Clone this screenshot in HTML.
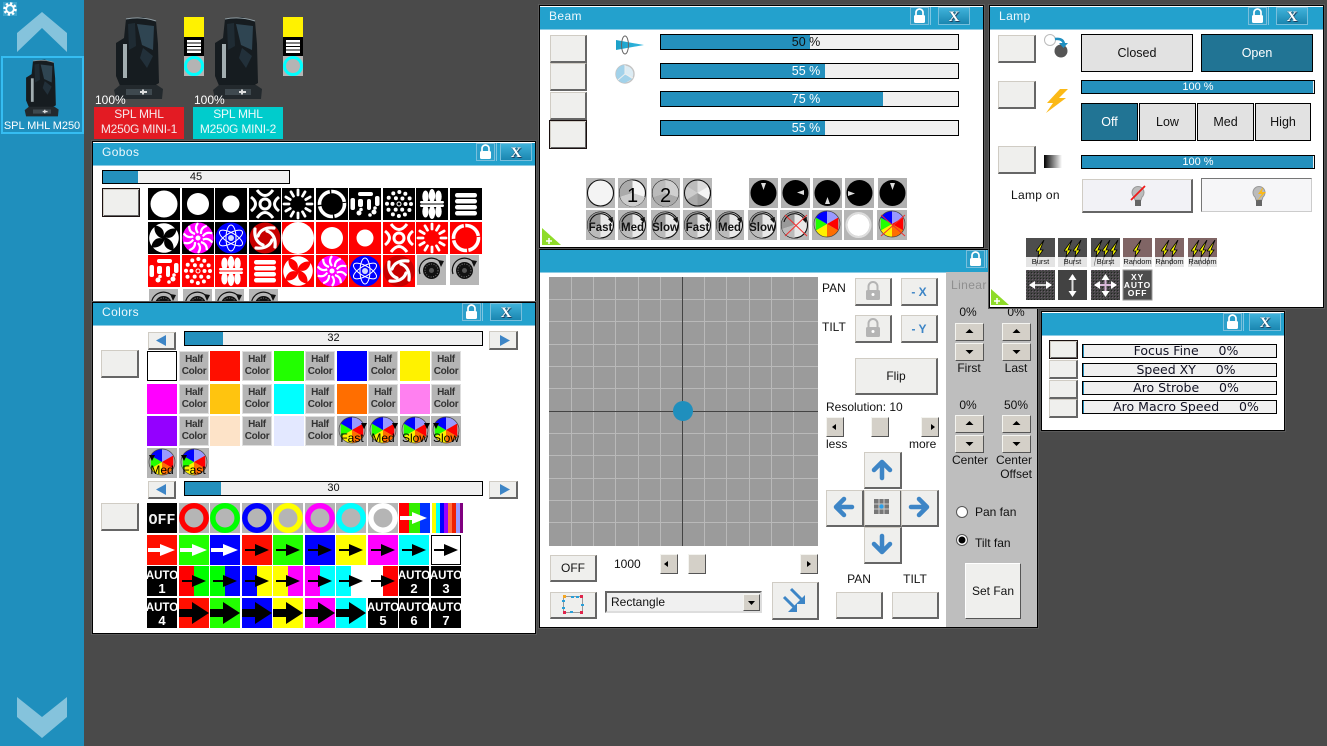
<!DOCTYPE html>
<html><head><meta charset="utf-8"><title>Fixture control</title>
<style>
html,body{margin:0;padding:0;width:1327px;height:746px;overflow:hidden;background:#4a4a4a;font-family:"Liberation Sans",sans-serif;font-size:12px;color:#111}
.a{position:absolute;box-sizing:border-box}
svg.l{position:absolute;left:0;top:0;width:1327px;height:746px;overflow:hidden;pointer-events:none;font-family:"Liberation Sans",sans-serif}
.t{position:absolute;white-space:nowrap;line-height:14px}
.c{text-align:center}
.w{position:absolute;box-sizing:border-box;background:#fff;border:1px solid #000;box-shadow:0 0 0 1px #5a5a5a}
.h{position:absolute;box-sizing:border-box;background:#23a1cd;border-bottom:1px solid #8ccbe4;color:#eef8fc;height:23px;padding-left:9px;line-height:19px;font-size:12px;letter-spacing:.4px}
.b{position:absolute;box-sizing:border-box;background:#efefed;border:1px solid #d0ccc4;border-right:2px solid #666;border-bottom:2px solid #666;display:flex;align-items:center;justify-content:center;font-size:12px;color:#111}
.f{border:1px solid #1a1010;box-shadow:inset 1px 1px 0 #d0ccc4,inset -1px -1px 0 #666,inset 2px 2px 0 #efefed}
.sb{position:absolute;box-sizing:border-box;background:#d4d0c8;border:1px solid #f4f4f0;border-right:1px solid #555;border-bottom:1px solid #555}
.s{position:absolute;box-sizing:border-box;border:1px solid #000;background-color:#f0f0f0;background-image:linear-gradient(#2490bd,#2490bd);background-repeat:no-repeat;text-align:center;font-size:11px;line-height:12px;color:#111}
.s2{border-width:1px;font-size:12.5px;line-height:14px;color:#fff}
.s3{background-size:1px 100%;font:12.5px/12px "DejaVu Sans",sans-serif;color:#112;white-space:pre;padding-left:13px}
.tg{position:absolute;box-sizing:border-box;border:1px solid #000;text-align:center;display:flex;align-items:center;justify-content:center;font-size:12.5px;background:#e2e2e2;color:#111}
.on{background:#217494;color:#fff}
.hc{position:absolute;box-sizing:border-box;width:30px;height:30px;border:1px solid #dedede;background:#b5b5b5;font-weight:bold;font-size:10px;line-height:12px;color:#333;text-align:center;padding-top:2px;letter-spacing:-.3px}
.lk{position:absolute;box-sizing:border-box;width:19px;height:18px;background:#2b9fca;border:1px solid #79bfdc;box-shadow:1px 0 0 #2b9fca,2px 0 0 #7fc6e2}
.x{position:absolute;box-sizing:border-box;width:32px;height:18px;background:linear-gradient(#3fb2da,#1a86b0);border:1px solid #79bfdc;color:#fff;font:bold 15px/14px "Liberation Serif",serif;text-align:center;padding-top:2px;text-shadow:0 0 1px #123,1px 1px 0 #246}
</style></head><body>

<svg width="0" height="0" style="position:absolute"><defs>
<symbol id="lock" viewBox="0 0 19 18" width="19" height="18"><path d="M6 8V5.500a3.500 3.500 0 0 1 7 0V8" fill="none" stroke="#fff" stroke-width="1.700"/><rect x="4" y="8" width="11" height="8" rx="1.500" fill="#fff"/></symbol>
<symbol id="lockg" viewBox="0 0 16 20" width="16" height="20"><path d="M3.500 9V5.500a4.500 4.500 0 0 1 9 0V9" fill="none" stroke="#b4b4b4" stroke-width="2"/><rect x="1" y="9" width="14" height="10" rx="1.500" fill="#b4b4b4"/><circle cx="8" cy="13.500" r="1.500" fill="#fff"/></symbol>
<symbol id="mh" viewBox="0 0 52 84" width="52" height="84">
<path d="M13 3L30 1L43 5L45 28L46 67L38 72H8L3 60V27L11 22Z" fill="#161c20"/>
<path d="M1 74L7 69H44L50 73L49 83H3Z" fill="#23292d"/><rect x="13" y="73" width="26" height="6" fill="#3f494f"/><path d="M27 76h7M30 73.500v5" stroke="#ddd" stroke-width="2"/>
<path d="M24 8L41 10L40 34L29 29Z" fill="#2f4552"/><path d="M13 3Q28 0 43 5" fill="none" stroke="#8d9aa0"/><path d="M30 32L40 40L34 52L27 42Z" fill="#22303a"/><path d="M15 8L22 7L23 30L16 34Z" fill="#1f2b33"/>
<rect x="10" y="28" width="4" height="34" fill="#a2adb0"/></symbol>
<symbol id="g4" viewBox="0 0 32 32" width="32" height="32"><g fill="none" stroke="#fff" stroke-width="3"><circle cx="16" cy="16" r="5"/><path d="M8 2Q16 13 24 2M8 30Q16 19 24 30M2 9Q11 16 2 23M30 9Q21 16 30 23"/></g></symbol>
<symbol id="g5" viewBox="0 0 32 32" width="32" height="32"><g stroke="#fff" stroke-width="2.800" stroke-linecap="round" stroke-dasharray="5 18 5"><path d="M16 2V30"/><path d="M16 2V30" transform="rotate(30 16 16)"/><path d="M16 2V30" transform="rotate(60 16 16)"/><path d="M16 2V30" transform="rotate(90 16 16)"/><path d="M16 2V30" transform="rotate(120 16 16)"/><path d="M16 2V30" transform="rotate(150 16 16)"/></g></symbol>
<symbol id="g6" viewBox="0 0 32 32" width="32" height="32"><circle cx="16" cy="16" r="12.500" fill="none" stroke="#fff" stroke-width="3.600" stroke-dasharray="18.100 1.535" transform="rotate(-5 16 16)"/></symbol>
<symbol id="g7" viewBox="0 0 32 32" width="32" height="32"><g fill="#fff"><rect x="9" y="4" width="15" height="4" rx="2"/><rect x="1.500" y="10" width="4.500" height="12" rx="2"/><rect x="9" y="11" width="5" height="8" rx="2"/><rect x="18" y="11" width="4" height="11" rx="2"/><rect x="26" y="8" width="4.500" height="10" rx="2"/><circle cx="10" cy="25" r="2.500"/><circle cx="12" cy="21.500" r="1.800"/><circle cx="25" cy="24" r="2.500"/><circle cx="26" cy="20" r="1.800"/><circle cx="21" cy="27" r="1.800"/></g></symbol>
<symbol id="g8" viewBox="0 0 32 32" width="32" height="32"><g fill="none" stroke="#fff" stroke-linecap="round"><circle cx="16" cy="16" r=".5" stroke-width="4"/><circle cx="16" cy="16" r="6.500" stroke-width="4" stroke-dasharray="0 6.807"/><circle cx="16" cy="16" r="12" stroke-width="4" stroke-dasharray="0 6.283"/></g></symbol>
<symbol id="g9" viewBox="0 0 32 32" width="32" height="32"><g fill="#fff"><ellipse cx="9.500" cy="8.500" rx="3.200" ry="6"/><ellipse cx="16" cy="7.500" rx="3.200" ry="6.500"/><ellipse cx="22.500" cy="8.500" rx="3.200" ry="6"/><ellipse cx="9.500" cy="23.500" rx="3.200" ry="6"/><ellipse cx="16" cy="24.500" rx="3.200" ry="6.500"/><ellipse cx="22.500" cy="23.500" rx="3.200" ry="6"/><rect x="4" y="13" width="24" height="2.500" rx="1.200"/><rect x="4" y="16.500" width="24" height="2.500" rx="1.200"/></g></symbol>
<symbol id="g10" viewBox="0 0 32 32" width="32" height="32"><g fill="#fff"><rect x="5" y="5" width="22" height="4.500" rx="2.200"/><rect x="5" y="11" width="22" height="4.500" rx="2.200"/><rect x="5" y="17" width="22" height="4.500" rx="2.200"/><rect x="5" y="23" width="22" height="4.500" rx="2.200"/></g></symbol>
<symbol id="g11" viewBox="0 0 32 32" width="32" height="32"><g fill="#fff"><path d="M15.500 14.500C17 9 14 5 8 3.500A14.500 14.500 0 0 1 27 6.500C22 6 17 9 15.500 14.500Z"/><path d="M15.500 14.500C17 9 14 5 8 3.500A14.500 14.500 0 0 1 27 6.500C22 6 17 9 15.500 14.500Z" transform="rotate(90 16 16)"/><path d="M15.500 14.500C17 9 14 5 8 3.500A14.500 14.500 0 0 1 27 6.500C22 6 17 9 15.500 14.500Z" transform="rotate(180 16 16)"/><path d="M15.500 14.500C17 9 14 5 8 3.500A14.500 14.500 0 0 1 27 6.500C22 6 17 9 15.500 14.500Z" transform="rotate(270 16 16)"/></g></symbol>
<symbol id="g12" viewBox="0 0 32 32" width="32" height="32"><circle cx="16" cy="16" r="15.500" fill="#f0f"/><g fill="none" stroke="#fff" stroke-width="2.200"><path d="M16 11Q12 6 16 1"/><path d="M16 11Q12 6 16 1" transform="rotate(36 16 16)"/><path d="M16 11Q12 6 16 1" transform="rotate(72 16 16)"/><path d="M16 11Q12 6 16 1" transform="rotate(108 16 16)"/><path d="M16 11Q12 6 16 1" transform="rotate(144 16 16)"/><path d="M16 11Q12 6 16 1" transform="rotate(180 16 16)"/><path d="M16 11Q12 6 16 1" transform="rotate(216 16 16)"/><path d="M16 11Q12 6 16 1" transform="rotate(252 16 16)"/><path d="M16 11Q12 6 16 1" transform="rotate(288 16 16)"/><path d="M16 11Q12 6 16 1" transform="rotate(324 16 16)"/></g><circle cx="16" cy="16" r="2.500" fill="#fff"/></symbol>
<symbol id="g13" viewBox="0 0 32 32" width="32" height="32"><circle cx="16" cy="16" r="15.500" fill="#00f"/><g fill="none" stroke="#fff" stroke-width="1"><ellipse cx="16" cy="16" rx="5" ry="13"/><ellipse cx="16" cy="16" rx="5" ry="13" transform="rotate(60 16 16)"/><ellipse cx="16" cy="16" rx="5" ry="13" transform="rotate(120 16 16)"/></g><circle cx="16" cy="16" r="3" fill="#cfd8ff"/></symbol>
<symbol id="g14" viewBox="0 0 32 32" width="32" height="32"><circle cx="16" cy="16" r="15.500" fill="#c80000"/><g fill="none" stroke="#fff" stroke-width="3.200" stroke-linecap="round"><path d="M9 14C11 8 17 5 25 6"/><path d="M9 14C11 8 17 5 25 6" transform="rotate(90 16 16)"/><path d="M9 14C11 8 17 5 25 6" transform="rotate(180 16 16)"/><path d="M9 14C11 8 17 5 25 6" transform="rotate(270 16 16)"/></g></symbol>
<symbol id="rot" viewBox="0 0 29 30" width="29" height="30"><rect width="29" height="30" fill="#b6b6b6"/><circle cx="14.500" cy="15.500" r="8.500" fill="#111"/><circle cx="14.500" cy="15.500" r="6.500" fill="none" stroke="#777" stroke-width="1" stroke-dasharray="1 1.500"/><circle cx="14.500" cy="15.500" r="2.500" fill="#555"/><path d="M3 19A12 12 0 0 1 24 8" fill="none" stroke="#111" stroke-width="1.200"/><path d="M21 5L27 6L24 12Z" fill="#111"/></symbol>
<symbol id="aw" viewBox="0 0 30 30" width="30" height="30"><path d="M1 13H13V9L28 15L13 21V17H1Z" fill="#fff"/></symbol>
<symbol id="ab" viewBox="0 0 30 30" width="30" height="30"><path d="M3 14H13V9L27 15L13 21V16H3Z" fill="#000"/></symbol>
<symbol id="abig" viewBox="0 0 30 30" width="30" height="30"><path d="M0 11H13V4L30 15L13 26V19H0Z" fill="#000"/></symbol>
<symbol id="cw" viewBox="0 0 30 30" width="30" height="30"><rect width="30" height="30" fill="#b5b5b5"/><path d="M15 14V1A13 13 0 0 1 26.260 7.500Z" fill="#99f"/><path d="M15 14L26.260 7.500V20.500Z" fill="#f00"/><path d="M15 14L26.260 20.500A13 13 0 0 1 15 27Z" fill="#ff6e00"/><path d="M15 14V27A13 13 0 0 1 3.740 20.500Z" fill="#fff000"/><path d="M15 14L3.740 20.500V7.500Z" fill="#22ff00"/><path d="M15 14L3.740 7.500A13 13 0 0 1 15 1Z" fill="#00f"/><circle cx="15" cy="14" r="13" fill="none" stroke="#444" stroke-width=".7"/></symbol>
<symbol id="gw" viewBox="0 0 29 30" width="29" height="30"><rect width="29" height="30" fill="#b8b8b8"/><circle cx="14.500" cy="15" r="13" fill="#f4f4f4" stroke="#111" stroke-width="1.100"/></symbol>
<symbol id="gs" viewBox="0 0 29 30" width="29" height="30"><rect width="29" height="30" fill="#b8b8b8"/><circle cx="14.500" cy="15" r="13" fill="#e8e8e8" stroke="#111" stroke-width="1.100"/><path d="M14.500 15V2A13 13 0 0 0 2 19Z" fill="#999"/><path d="M14.500 15L2 19A13 13 0 0 0 14.500 28Z" fill="#bbb"/><path d="M4 12A11 11 0 0 1 25 11" fill="none" stroke="#111" stroke-width="1.100"/><path d="M22 9L27 7L26 13Z" fill="#111"/></symbol>
<symbol id="bd" viewBox="0 0 29 30" width="29" height="30"><rect width="29" height="30" fill="#b0b0b0"/><circle cx="14.500" cy="15" r="13" fill="#000"/></symbol>
<symbol id="bt" viewBox="0 0 10 26" width="10" height="26"><path d="M8 0L4 10H7L2 17L3 11H0Z" fill="#ff0" stroke="#000" stroke-width=".8"/><path d="M2 17L0 26" stroke="#777" stroke-width=".7"/></symbol>
<symbol id="tx" viewBox="0 0 29 30" width="29" height="30"><rect width="29" height="30" fill="#454545"/><rect width="29" height="30" fill="url(#dots)"/></symbol>
<pattern id="dots" width="3" height="3" patternUnits="userSpaceOnUse"><rect width="1" height="1" fill="#6a5a6a"/><rect x="2" y="2" width="1" height="1" fill="#222"/></pattern>
<linearGradient id="gr"><stop offset="0" stop-color="#000"/><stop offset="1" stop-color="#fff"/></linearGradient>
<linearGradient id="cn"><stop offset="0" stop-color="#1aa0c8"/><stop offset="1" stop-color="#35b8e0"/></linearGradient>
<symbol id="bb" viewBox="0 0 14 22" width="14" height="22"><path d="M3 11A6 6 0 1 1 11 11L10 14H4Z" fill="#bbb" stroke="#999"/><rect x="4" y="14" width="6" height="6" fill="#666"/></symbol>
</defs></svg>

<!-- Sidebar -->
<div class="a" style="left:0;top:0;width:84px;height:746px;background:#1f8fbd"></div>
<div class="a" style="left:1px;top:56px;width:83px;height:78px;border:2px solid #35bdf2"></div>
<div class="t c" style="left:0;top:119px;width:84px;color:#fff;font-size:11px;letter-spacing:-.05px">SPL MHL M250</div>
<div class="t c" style="left:94px;top:107px;width:90px;height:32px;background:#e31b23;color:#f6e8ea;line-height:15px;letter-spacing:-.2px">SPL MHL<br>M250G MINI-1</div>
<div class="t c" style="left:193px;top:107px;width:90px;height:32px;background:#00cccc;color:#eafafa;line-height:15px;letter-spacing:-.2px">SPL MHL<br>M250G MINI-2</div>
<svg class="l">
<rect x="3" y="2" width="14" height="14" fill="#3ea4cc"/><circle cx="10" cy="9" r="5.500" fill="none" stroke="#fff" stroke-width="2.500" stroke-dasharray="2.200 2.100"/><circle cx="10" cy="9" r="3.800" fill="none" stroke="#fff" stroke-width="1.800"/>
<path d="M17 33L42 12L67 33V52L42 28L17 52Z" fill="#85c3dc"/>
<path d="M17 697L42 717L67 697V717L42 738L17 717Z" fill="#85c3dc"/>
<use href="#mh" x="24" y="58" width="36" height="60"/>
<use href="#mh" x="113" y="16" width="52" height="84"/>
<use href="#mh" x="212" y="16" width="52" height="84"/>
<rect x="184" y="17" width="20" height="20" fill="#fff200"/><rect x="184" y="37" width="20" height="19" fill="#000"/>
<rect x="187" y="40" width="14" height="2.500" fill="#fff"/><rect x="187" y="43.500" width="14" height="2.500" fill="#fff"/><rect x="187" y="47" width="14" height="2.500" fill="#fff"/><rect x="187" y="50.500" width="14" height="2.500" fill="#fff"/>
<rect x="184" y="56" width="20" height="20" fill="#b4b4b4"/><circle cx="194" cy="66" r="8.500" fill="none" stroke="#00ffff" stroke-width="3"/>
<rect x="283" y="17" width="20" height="20" fill="#fff200"/><rect x="283" y="37" width="20" height="19" fill="#000"/>
<rect x="286" y="40" width="14" height="2.500" fill="#fff"/><rect x="286" y="43.500" width="14" height="2.500" fill="#fff"/><rect x="286" y="47" width="14" height="2.500" fill="#fff"/><rect x="286" y="50.500" width="14" height="2.500" fill="#fff"/>
<rect x="283" y="56" width="20" height="20" fill="#b4b4b4"/><circle cx="293" cy="66" r="8.500" fill="none" stroke="#00ffff" stroke-width="3"/>
</svg>
<div class="t" style="left:95px;top:93px;color:#fff">100%</div>
<div class="t" style="left:194px;top:93px;color:#fff">100%</div>

<!-- Gobos -->
<div class="w" style="left:92px;top:141px;width:444px;height:162px"><div class="h" style="left:0;top:1px;width:442px">Gobos</div></div>
<div class="lk" style="left:476px;top:143px"><svg width="17" height="16" style="display:block"><use href="#lock" x="-1" y="-1"/></svg></div>
<div class="x" style="left:500px;top:143px">X</div>
<div class="s" style="left:102px;top:170px;width:188px;height:14px;background-size:35px 100%">45</div>
<div class="b f" style="left:102px;top:188px;width:38px;height:29px"></div>
<svg class="l">
<g fill="#000"><rect x="148" y="188" width="32" height="32"/><rect x="182" y="188" width="32" height="32"/><rect x="215" y="188" width="32" height="32"/><rect x="249" y="188" width="32" height="32"/><rect x="282" y="188" width="32" height="32"/><rect x="316" y="188" width="32" height="32"/><rect x="349" y="188" width="32" height="32"/><rect x="383" y="188" width="32" height="32"/><rect x="416" y="188" width="32" height="32"/><rect x="450" y="188" width="32" height="32"/>
<rect x="148" y="222" width="32" height="32"/><rect x="182" y="222" width="32" height="32"/><rect x="215" y="222" width="32" height="32"/><rect x="249" y="222" width="32" height="32"/></g>
<g fill="#f00"><rect x="282" y="222" width="32" height="32"/><rect x="316" y="222" width="32" height="32"/><rect x="349" y="222" width="32" height="32"/><rect x="383" y="222" width="32" height="32"/><rect x="416" y="222" width="32" height="32"/><rect x="450" y="222" width="32" height="32"/>
<rect x="148" y="255" width="32" height="32"/><rect x="182" y="255" width="32" height="32"/><rect x="215" y="255" width="32" height="32"/><rect x="249" y="255" width="32" height="32"/><rect x="282" y="255" width="32" height="32"/><rect x="316" y="255" width="32" height="32"/><rect x="349" y="255" width="32" height="32"/><rect x="383" y="255" width="32" height="32"/></g>
<g fill="#fff"><circle cx="164" cy="204" r="13.500"/><circle cx="198" cy="204" r="11"/><circle cx="231" cy="204" r="8.500"/><circle cx="298" cy="238" r="16"/><circle cx="332" cy="238" r="11"/><circle cx="365" cy="238" r="8.500"/></g>
<use href="#g4" x="249" y="188"/><use href="#g5" x="282" y="188"/><use href="#g6" x="316" y="188"/><use href="#g7" x="349" y="188"/><use href="#g8" x="383" y="188"/><use href="#g9" x="416" y="188"/><use href="#g10" x="450" y="188"/>
<use href="#g11" x="148" y="222"/><use href="#g12" x="182" y="222"/><use href="#g13" x="215" y="222"/><use href="#g14" x="249" y="222"/>
<use href="#g4" x="383" y="222"/><use href="#g5" x="416" y="222"/><use href="#g6" x="450" y="222"/>
<use href="#g7" x="148" y="255"/><use href="#g8" x="182" y="255"/><use href="#g9" x="215" y="255"/><use href="#g10" x="249" y="255"/><use href="#g11" x="282" y="255"/><use href="#g12" x="316" y="255"/><use href="#g13" x="349" y="255"/><use href="#g14" x="383" y="255"/>
<use href="#rot" x="417" y="255"/><use href="#rot" x="450" y="255"/>
<use href="#rot" x="149" y="289"/><use href="#rot" x="183" y="289"/><use href="#rot" x="215" y="289"/><use href="#rot" x="249" y="289"/>
</svg>

<!-- Colors -->
<div class="w" style="left:92px;top:302px;width:444px;height:332px"><div class="h" style="left:0;top:0;width:442px">Colors</div></div>
<div class="lk" style="left:462px;top:303px"><svg width="17" height="16" style="display:block"><use href="#lock" x="-1" y="-1"/></svg></div>
<div class="x" style="left:490px;top:303px">X</div>
<div class="b" style="left:148px;top:332px;width:28px;height:18px"></div>
<div class="b" style="left:489px;top:331px;width:29px;height:19px"></div>
<div class="s" style="left:184px;top:331px;width:299px;height:15px;background-size:38px 100%;line-height:13px">32</div>
<div class="b" style="left:101px;top:350px;width:38px;height:28px"></div>
<div class="b" style="left:148px;top:481px;width:28px;height:18px"></div>
<div class="b" style="left:489px;top:481px;width:29px;height:18px"></div>
<div class="s" style="left:184px;top:481px;width:299px;height:15px;background-size:36px 100%;line-height:13px">30</div>
<div class="b" style="left:101px;top:503px;width:38px;height:28px"></div>
<div class="hc" style="left:179px;top:351px">Half<br>Color</div><div class="hc" style="left:242px;top:351px">Half<br>Color</div><div class="hc" style="left:305px;top:351px">Half<br>Color</div><div class="hc" style="left:368px;top:351px">Half<br>Color</div><div class="hc" style="left:431px;top:351px">Half<br>Color</div>
<div class="hc" style="left:179px;top:384px">Half<br>Color</div><div class="hc" style="left:242px;top:384px">Half<br>Color</div><div class="hc" style="left:305px;top:384px">Half<br>Color</div><div class="hc" style="left:368px;top:384px">Half<br>Color</div><div class="hc" style="left:431px;top:384px">Half<br>Color</div>
<div class="hc" style="left:179px;top:416px">Half<br>Color</div><div class="hc" style="left:242px;top:416px">Half<br>Color</div><div class="hc" style="left:305px;top:416px">Half<br>Color</div>
<svg class="l" font-size="12">
<path d="M166 335V346L156 340.500Z" fill="#3d85c6"/><path d="M500 335V346L510 340.500Z" fill="#3d85c6"/>
<path d="M166 484V495L156 489.500Z" fill="#3d85c6"/><path d="M500 484V495L510 489.500Z" fill="#3d85c6"/>
<rect x="147.500" y="351.500" width="29" height="29" fill="#fff" stroke="#000"/>
<rect x="210" y="351" width="30" height="30" fill="#ff0f00"/><rect x="274" y="351" width="30" height="30" fill="#22ff00"/><rect x="337" y="351" width="30" height="30" fill="#00f"/><rect x="400" y="351" width="30" height="30" fill="#fff200"/>
<rect x="147" y="384" width="30" height="30" fill="#f0f"/><rect x="210" y="384" width="30" height="30" fill="#ffc40f"/><rect x="274" y="384" width="30" height="30" fill="#0ff"/><rect x="337" y="384" width="30" height="30" fill="#ff6e00"/><rect x="400" y="384" width="30" height="30" fill="#ff80f0"/>
<rect x="147" y="416" width="30" height="30" fill="#9400ff"/><rect x="210" y="416" width="30" height="30" fill="#fde3c8"/><rect x="274" y="416" width="30" height="30" fill="#e3e8ff"/>
<use href="#cw" x="337" y="416"/><use href="#cw" x="368" y="416"/><use href="#cw" x="400" y="416"/><use href="#cw" x="431" y="416"/>
<path d="M361 423h6l-3 6zM392 423h6l-3 6zM424 423h6l-3 6zM433 423h6l-3 6z" fill="#000"/>
<text x="352" y="442" text-anchor="middle" fill="#000">Fast</text><text x="383" y="442" text-anchor="middle" fill="#000">Med</text><text x="415" y="442" text-anchor="middle" fill="#000">Slow</text><text x="446" y="442" text-anchor="middle" fill="#000">Slow</text>
<use href="#cw" x="147" y="448"/><use href="#cw" x="179" y="448"/><path d="M149 455h6l-3 6zM181 455h6l-3 6z" fill="#000"/>
<text x="162" y="474" text-anchor="middle" fill="#000">Med</text><text x="194" y="474" text-anchor="middle" fill="#000">Fast</text>

<rect x="147" y="503" width="30" height="30" fill="#000"/><text x="162" y="524" text-anchor="middle" fill="#eee" font-weight="bold" font-size="15" font-family="Liberation Mono">OFF</text>
<g fill="#b5b5b5"><rect x="179" y="503" width="30" height="30"/><rect x="210" y="503" width="30" height="30"/><rect x="242" y="503" width="30" height="30"/><rect x="273" y="503" width="30" height="30"/><rect x="305" y="503" width="30" height="30"/><rect x="336" y="503" width="30" height="30"/><rect x="368" y="503" width="30" height="30"/></g>
<g fill="none" stroke-width="5.500"><circle cx="194" cy="518" r="12.200" stroke="#f00"/><circle cx="225" cy="518" r="12.200" stroke="#0f0"/><circle cx="257" cy="518" r="12.200" stroke="#00f"/><circle cx="288" cy="518" r="12.200" stroke="#ff0"/><circle cx="320" cy="518" r="12.200" stroke="#f0f"/><circle cx="351" cy="518" r="12.200" stroke="#0ff"/><circle cx="383" cy="518" r="12.200" stroke="#fff"/></g>
<rect x="399" y="503" width="10" height="30" fill="#f00"/><rect x="409" y="503" width="11" height="30" fill="#33ee00"/><rect x="420" y="503" width="10" height="30" fill="#0033ff"/><use href="#aw" x="399" y="503"/>
<rect x="432" y="503" width="4" height="30" fill="#ff0"/><rect x="436" y="503" width="4" height="30" fill="#0ff"/><rect x="440" y="503" width="4" height="30" fill="#00f"/><rect x="444" y="503" width="4" height="30" fill="#90f"/><rect x="448" y="503" width="4" height="30" fill="#ff6e40"/><rect x="452" y="503" width="4" height="30" fill="#f02000"/><rect x="456" y="503" width="4" height="30" fill="#99f"/><rect x="460" y="503" width="3" height="30" fill="#800080"/>

<rect x="147" y="535" width="30" height="30" fill="#ff0f00"/><use href="#aw" x="147" y="535"/>
<rect x="179" y="535" width="30" height="30" fill="#22ff00"/><use href="#aw" x="179" y="535"/>
<rect x="210" y="535" width="30" height="30" fill="#00f"/><use href="#aw" x="210" y="535"/>
<rect x="242" y="535" width="30" height="30" fill="#ff0f00"/><use href="#ab" x="242" y="535"/>
<rect x="273" y="535" width="30" height="30" fill="#22ff00"/><use href="#ab" x="273" y="535"/>
<rect x="305" y="535" width="30" height="30" fill="#00f"/><use href="#ab" x="305" y="535"/>
<rect x="336" y="535" width="30" height="30" fill="#ff0"/><use href="#ab" x="336" y="535"/>
<rect x="368" y="535" width="30" height="30" fill="#f0f"/><use href="#ab" x="368" y="535"/>
<rect x="399" y="535" width="30" height="30" fill="#0ff"/><use href="#ab" x="399" y="535"/>
<rect x="431.500" y="535.500" width="29" height="29" fill="#fff" stroke="#000"/><use href="#ab" x="431" y="535"/>

<g font-weight="bold" font-size="11.500" text-anchor="middle" fill="#fff">
<rect x="147" y="566" width="30" height="30" fill="#000"/><text x="162" y="579">AUTO</text><text x="162" y="593" font-size="13">1</text>
<rect x="399" y="566" width="30" height="30" fill="#000"/><text x="414" y="579">AUTO</text><text x="414" y="593" font-size="13">2</text>
<rect x="431" y="566" width="30" height="30" fill="#000"/><text x="446" y="579">AUTO</text><text x="446" y="593" font-size="13">3</text>
<rect x="147" y="598" width="30" height="30" fill="#000"/><text x="162" y="611">AUTO</text><text x="162" y="625" font-size="13">4</text>
<rect x="368" y="598" width="30" height="30" fill="#000"/><text x="383" y="611">AUTO</text><text x="383" y="625" font-size="13">5</text>
<rect x="399" y="598" width="30" height="30" fill="#000"/><text x="414" y="611">AUTO</text><text x="414" y="625" font-size="13">6</text>
<rect x="431" y="598" width="30" height="30" fill="#000"/><text x="446" y="611">AUTO</text><text x="446" y="625" font-size="13">7</text>
</g>
<rect x="179" y="566" width="15" height="30" fill="#f00"/><rect x="194" y="566" width="15" height="30" fill="#0f0"/><use href="#ab" x="179" y="566"/>
<rect x="210" y="566" width="15" height="30" fill="#0f0"/><rect x="225" y="566" width="15" height="30" fill="#00f"/><use href="#ab" x="210" y="566"/>
<rect x="242" y="566" width="15" height="30" fill="#00f"/><rect x="257" y="566" width="15" height="30" fill="#ff0"/><use href="#ab" x="242" y="566"/>
<rect x="273" y="566" width="15" height="30" fill="#ff0"/><rect x="288" y="566" width="15" height="30" fill="#f0f"/><use href="#ab" x="273" y="566"/>
<rect x="305" y="566" width="15" height="30" fill="#f0f"/><rect x="320" y="566" width="15" height="30" fill="#0ff"/><use href="#ab" x="305" y="566"/>
<rect x="336" y="566" width="15" height="30" fill="#0ff"/><rect x="351" y="566" width="15" height="30" fill="#fff"/><use href="#ab" x="336" y="566"/>
<rect x="368" y="566" width="15" height="30" fill="#fff"/><rect x="383" y="566" width="15" height="30" fill="#f00"/><use href="#ab" x="368" y="566"/>

<rect x="179" y="598" width="30" height="30" fill="#ff0f00"/><use href="#abig" x="179" y="598"/>
<rect x="210" y="598" width="30" height="30" fill="#22ff00"/><use href="#abig" x="210" y="598"/>
<rect x="242" y="598" width="30" height="30" fill="#00f"/><use href="#abig" x="242" y="598"/>
<rect x="273" y="598" width="30" height="30" fill="#ff0"/><use href="#abig" x="273" y="598"/>
<rect x="305" y="598" width="30" height="30" fill="#f0f"/><use href="#abig" x="305" y="598"/>
<rect x="336" y="598" width="30" height="30" fill="#0ff"/><use href="#abig" x="336" y="598"/>
</svg>

<!-- Beam -->
<div class="w" style="left:539px;top:5px;width:445px;height:243px"><div class="h" style="left:0;top:1px;width:443px">Beam</div></div>
<div class="lk" style="left:910px;top:7px"><svg width="17" height="16" style="display:block"><use href="#lock" x="-1" y="-1"/></svg></div>
<div class="x" style="left:938px;top:7px">X</div>
<div class="b" style="left:550px;top:35px;width:37px;height:28px"></div>
<div class="b" style="left:550px;top:63px;width:37px;height:28px"></div>
<div class="b" style="left:550px;top:92px;width:37px;height:28px"></div>
<div class="b f" style="left:549px;top:120px;width:38px;height:29px"></div>
<div class="s s2" style="left:660px;top:34px;width:299px;height:16px;background-size:149px 100%;color:#111;padding-right:7px">50 %</div>
<div class="s s2" style="left:660px;top:63px;width:299px;height:16px;background-size:164px 100%;padding-right:7px">55 %</div>
<div class="s s2" style="left:660px;top:91px;width:299px;height:16px;background-size:222px 100%;padding-right:7px">75 %</div>
<div class="s s2" style="left:660px;top:120px;width:299px;height:16px;background-size:164px 100%;padding-right:7px">55 %</div>
<svg class="l">
<path d="M616 40L644 45L616 50Z" fill="url(#cn)"/><ellipse cx="625" cy="45" rx="3.500" ry="9" fill="none" stroke="#666"/>
<circle cx="625" cy="74" r="9" fill="#dcecf4" stroke="#c4c4c4" stroke-width="1.400"/><path d="M625 74V65A9 9 0 0 0 625 83L632 79Z" fill="#a2d2ea"/><path d="M625 65V74L633 78M625 74L618 80" stroke="#eee" fill="none"/>
<use href="#gw" x="586" y="178"/>
<use href="#gw" x="618" y="178"/><path d="M632.500 193V180A13 13 0 0 0 620 197Z" fill="#aaa"/><path d="M632.500 193L620 197A13 13 0 0 0 645 197Z" fill="#ccc"/><text x="632.500" y="202" text-anchor="middle" font-size="20" fill="#000">1</text>
<use href="#gw" x="651" y="178"/><path d="M665.500 193V180A13 13 0 0 0 653 197Z" fill="#bbb"/><path d="M665.500 193L653 197A13 13 0 0 0 678 197Z" fill="#aaa"/><path d="M665.500 193V180A13 13 0 0 1 678 197Z" fill="#d0d0d0"/><text x="665.500" y="202" text-anchor="middle" font-size="20" fill="#000">2</text>
<use href="#gw" x="683" y="178"/><path d="M697.500 193L686 186A13 13 0 0 1 697.500 180Z" fill="#bbb"/><path d="M697.500 193L709 186A13 13 0 0 0 697.500 180Z" fill="#ddd"/><path d="M697.500 193L686 186A13 13 0 0 0 686 200Z" fill="#ccc"/><path d="M697.500 193L686 200A13 13 0 0 0 697.500 206Z" fill="#aaa"/><path d="M697.500 193V206A13 13 0 0 0 709 200Z" fill="#999"/><circle cx="697.500" cy="193" r="13" fill="none" stroke="#111"/>
<use href="#bd" x="749" y="178"/><path d="M761 183h5l-2.500 7z" fill="#ddd"/>
<use href="#bd" x="781" y="178"/><path d="M804 190v5l-7-2.500z" fill="#ddd"/>
<use href="#bd" x="813" y="178"/><path d="M825 204h5l-2.500-7z" fill="#ddd"/>
<use href="#bd" x="845" y="178"/><path d="M848 191v5l7-2.500z" fill="#ddd"/>
<use href="#bd" x="878" y="178"/><path d="M890 183h5l-2.500 7z" fill="#ddd"/>
<g font-weight="bold" font-size="11.500" text-anchor="middle" fill="#111">
<use href="#gs" x="586" y="210"/><use href="#gs" x="618" y="210"/><use href="#gs" x="651" y="210"/><use href="#gs" x="683" y="210"/><use href="#gs" x="715" y="210"/><use href="#gs" x="748" y="210"/><use href="#gs" x="780" y="210"/>
<text x="600.500" y="231">Fast</text><text x="632.500" y="231">Med</text><text x="665.500" y="231">Slow</text><text x="697.500" y="231">Fast</text><text x="729.500" y="231">Med</text><text x="762.500" y="231">Slow</text>
</g>
<path d="M785 215L807 236M807 215L785 236" stroke="#f03030" stroke-width="1"/>
<use href="#cw" x="812" y="210"/>
<rect x="844" y="210" width="29" height="30" fill="#b5b5b5"/><circle cx="858.500" cy="225" r="11" fill="#fff"/><circle cx="858.500" cy="225" r="12" fill="none" stroke="#ddd" stroke-width="2"/>
<use href="#cw" x="877" y="210"/><path d="M881 215L905 236M905 215L881 236" stroke="#f03030" stroke-width="1"/>
<path d="M542 228L561 245H542Z" fill="#8fdc28"/><path d="M546 241h6M549 238v6" stroke="#fff" stroke-width="1.500"/>
</svg>

<!-- XY -->
<div class="w" style="left:539px;top:249px;width:499px;height:379px"><div class="h" style="left:0;top:0;width:497px"></div></div>
<div class="a" style="left:946px;top:272px;width:91px;height:355px;background:#bebebe"></div>
<div class="lk" style="left:966px;top:250px"><svg width="17" height="16" style="display:block"><use href="#lock" x="-1" y="-1"/></svg></div>
<svg class="l">
<rect x="549" y="277" width="269" height="269" fill="#9b9b9b"/>
<g stroke="#b9b9b9" stroke-width="1"><path d="M571.500 277V546M593.500 277V546M615.500 277V546M638.500 277V546M660.500 277V546M704.500 277V546M726.500 277V546M749.500 277V546M771.500 277V546M793.500 277V546"/><path d="M549 299.500H818M549 321.500H818M549 344.500H818M549 366.500H818M549 388.500H818M549 433.500H818M549 455.500H818M549 478.500H818M549 500.500H818M549 522.500H818"/></g>
<path d="M682.500 277V546M549 411.500H818" stroke="#444"/>
<circle cx="683" cy="411" r="10" fill="#1f8fbd"/>
</svg>
<div class="t" style="left:822px;top:281px">PAN</div>
<div class="t" style="left:822px;top:320px">TILT</div>
<div class="b" style="left:855px;top:278px;width:37px;height:28px"></div>
<div class="b" style="left:901px;top:278px;width:37px;height:28px;color:#3d85c6;font-weight:bold;font-size:12px">- X</div>
<div class="b" style="left:855px;top:315px;width:37px;height:28px"></div>
<div class="b" style="left:901px;top:315px;width:37px;height:28px;color:#3d85c6;font-weight:bold;font-size:12px">- Y</div>
<div class="b" style="left:855px;top:358px;width:83px;height:37px">Flip</div>
<div class="t" style="left:826px;top:400px">Resolution: 10</div>
<div class="sb" style="left:826px;top:417px;width:18px;height:20px"></div>
<div class="sb" style="left:871px;top:417px;width:18px;height:20px"></div>
<div class="sb" style="left:921px;top:417px;width:18px;height:20px"></div>
<div class="t" style="left:826px;top:437px">less</div>
<div class="t" style="left:909px;top:437px">more</div>
<div class="t" style="left:951px;top:278px;color:#8f8f8f;letter-spacing:.4px">Linear</div>
<div class="t c" style="left:948px;top:305px;width:40px">0%</div>
<div class="t c" style="left:996px;top:305px;width:40px">0%</div>
<div class="sb" style="left:955px;top:323px;width:29px;height:18px"></div><div class="sb" style="left:1002px;top:323px;width:29px;height:18px"></div>
<div class="sb" style="left:955px;top:343px;width:29px;height:18px"></div><div class="sb" style="left:1002px;top:343px;width:29px;height:18px"></div>
<div class="t c" style="left:948px;top:361px;width:42px">First</div>
<div class="t c" style="left:996px;top:361px;width:40px">Last</div>
<div class="t c" style="left:948px;top:398px;width:40px">0%</div>
<div class="t c" style="left:996px;top:398px;width:40px">50%</div>
<div class="sb" style="left:955px;top:415px;width:29px;height:18px"></div><div class="sb" style="left:1002px;top:415px;width:29px;height:18px"></div>
<div class="sb" style="left:955px;top:435px;width:29px;height:18px"></div><div class="sb" style="left:1002px;top:435px;width:29px;height:18px"></div>
<div class="t" style="left:952px;top:453px">Center</div>
<div class="t" style="left:995px;top:453px;width:37px;text-align:right">Center<br>Offset</div>
<div class="b" style="left:864px;top:452px;width:38px;height:37px"></div>
<div class="b" style="left:826px;top:490px;width:38px;height:37px"></div>
<div class="b" style="left:864px;top:490px;width:38px;height:37px"></div>
<div class="b" style="left:901px;top:490px;width:38px;height:37px"></div>
<div class="b" style="left:864px;top:527px;width:38px;height:37px"></div>
<div class="t" style="left:975px;top:505px">Pan fan</div>
<div class="t" style="left:975px;top:536px">Tilt fan</div>
<div class="a" style="left:965px;top:563px;width:56px;height:56px;background:#efefed;border:1px solid #fff;border-right:1px solid #555;border-bottom:1px solid #555;display:flex;align-items:center;justify-content:center">Set Fan</div>
<div class="t c" style="left:836px;top:572px;width:46px">PAN</div>
<div class="t c" style="left:892px;top:572px;width:46px">TILT</div>
<div class="b" style="left:836px;top:592px;width:47px;height:27px"></div>
<div class="b" style="left:892px;top:592px;width:47px;height:27px"></div>
<div class="b" style="left:550px;top:555px;width:47px;height:27px">OFF</div>
<div class="t" style="left:614px;top:557px">1000</div>
<div class="sb" style="left:660px;top:554px;width:18px;height:20px"></div>
<div class="sb" style="left:688px;top:554px;width:18px;height:20px"></div>
<div class="sb" style="left:800px;top:554px;width:18px;height:20px"></div>
<div class="b" style="left:550px;top:592px;width:47px;height:27px"></div>
<div class="a" style="left:605px;top:591px;width:157px;height:22px;background:#f0f0f0;border:2px solid #666;border-right-color:#ddd;border-bottom-color:#ddd;padding:2px 4px;line-height:14px">Rectangle</div>
<div class="sb" style="left:743px;top:594px;width:17px;height:17px"></div>
<div class="b" style="left:772px;top:582px;width:47px;height:38px"></div>
<svg class="l">
<use href="#lockg" x="865" y="281"/><use href="#lockg" x="865" y="318"/>
<path d="M836 424v6l-4-3zM931 424v6l4-3z" fill="#000"/>
<path d="M969.500 329l-4 4h8zM1016.500 329l-4 4h8zM965.500 350h8l-4 4zM1012.500 350h8l-4 4zM969.500 421l-4 4h8zM1016.500 421l-4 4h8zM965.500 442h8l-4 4zM1012.500 442h8l-4 4z" fill="#000"/>
<g stroke="#3d85c6" stroke-width="4.500" fill="none" stroke-linecap="round" stroke-linejoin="round"><path d="M882 463V478M874 470L882 462L890 470"/><path d="M882 536V551M874 544L882 552L890 544"/><path d="M837 507H852M844 499L836 507L844 515"/><path d="M911 507H926M919 499L927 507L919 515"/></g>
<g fill="#777"><rect x="874" y="499" width="15" height="15"/></g><path d="M874 504h15M874 509h15M879 499v15M884 499v15" stroke="#ccc"/><circle cx="881.500" cy="506.500" r="2.200" fill="#2a9fe8"/>
<circle cx="962" cy="512" r="5.500" fill="#fff" stroke="#555" stroke-width="1"/>
<circle cx="962" cy="540" r="5.500" fill="#fff" stroke="#555" stroke-width="1"/><circle cx="962" cy="540" r="3.500" fill="#000"/>
<path d="M668 561v6l-4-3z" fill="#000"/><path d="M807 561v6l4-3z" fill="#000"/>
<rect x="563.500" y="596.500" width="19" height="16" fill="none" stroke="#999"/>
<g fill="#2a9fd8"><rect x="562" y="600" width="3" height="2"/><rect x="562" y="607" width="3" height="2"/><rect x="571" y="596" width="3" height="2"/><rect x="576" y="596" width="3" height="2"/><rect x="581" y="604" width="3" height="2"/><rect x="570" y="611" width="3" height="2"/></g>
<rect x="563" y="595" width="3" height="3" fill="#f5a623"/><rect x="580" y="595" width="3" height="3" fill="#e0244a"/><rect x="563" y="611" width="3" height="3" fill="#e0244a"/><rect x="580" y="611" width="3" height="3" fill="#e0244a"/>
<path d="M748 601h7l-3.500 4z" fill="#000"/>
<g stroke="#3d85c6" stroke-width="3" fill="none"><path d="M791 589L802 600"/><path d="M784 597L794 607"/></g><path d="M805 595V604H796ZM797 603V612H788Z" fill="#3d85c6"/>
</svg>

<!-- Lamp -->
<div class="w" style="left:989px;top:5px;width:335px;height:303px"><div class="h" style="left:0;top:1px;width:333px">Lamp</div></div>
<div class="lk" style="left:1248px;top:7px"><svg width="17" height="16" style="display:block"><use href="#lock" x="-1" y="-1"/></svg></div>
<div class="x" style="left:1276px;top:7px">X</div>
<div class="b" style="left:998px;top:35px;width:38px;height:28px"></div>
<div class="b" style="left:998px;top:81px;width:38px;height:28px"></div>
<div class="b" style="left:998px;top:146px;width:38px;height:28px"></div>
<div class="tg" style="left:1081px;top:34px;width:112px;height:38px">Closed</div>
<div class="tg on" style="left:1201px;top:34px;width:112px;height:38px">Open</div>
<div class="s" style="left:1081px;top:80px;width:234px;height:14px;background-size:231px 100%;color:#fff">100 %</div>
<div class="tg on" style="left:1081px;top:103px;width:57px;height:38px">Off</div>
<div class="tg" style="left:1139px;top:103px;width:57px;height:38px">Low</div>
<div class="tg" style="left:1197px;top:103px;width:57px;height:38px">Med</div>
<div class="tg" style="left:1255px;top:103px;width:56px;height:38px">High</div>
<div class="s" style="left:1081px;top:155px;width:234px;height:14px;background-size:231px 100%;color:#fff">100 %</div>
<div class="t" style="left:1011px;top:188px;letter-spacing:.3px">Lamp on</div>
<div class="b" style="left:1082px;top:179px;width:111px;height:34px;background:#f2f2f6"></div>
<div class="a" style="left:1201px;top:178px;width:111px;height:34px;background:#f6f6f8;border:1px solid #ccc;border-left:1px solid #777;border-top:1px solid #777"></div>
<svg class="l">
<circle cx="1050" cy="40" r="5.500" fill="#fff" stroke="#bbb"/><circle cx="1061" cy="51" r="6.500" fill="#555"/><path d="M1055 39Q1063 38 1064 44" fill="none" stroke="#1f8fc0" stroke-width="2.500"/><path d="M1059 43h9l-4.500 5z" fill="#1f8fc0"/>
<path d="M1060 89H1068L1059 98H1066L1046 113L1053 103H1047Z" fill="#fbb917"/>
<rect x="1044" y="155" width="18" height="13" fill="url(#gr)"/>
<use href="#bb" x="1131" y="186"/><path d="M1131 200L1145 186" stroke="#f01818" stroke-width="1.800"/>
<use href="#bb" x="1252" y="186"/><path d="M1263 187L1258 194H1262L1257 201L1266 192H1262Z" fill="#fbb917"/>
<g font-size="7.500" text-anchor="middle" fill="#111">
<g fill="#4d4d4d"><rect x="1026" y="238" width="29" height="19"/><rect x="1058" y="238" width="29" height="19"/><rect x="1091" y="238" width="29" height="19"/></g>
<g fill="#806565"><rect x="1123" y="238" width="29" height="19"/><rect x="1155" y="238" width="29" height="19"/><rect x="1188" y="238" width="29" height="19"/></g>
<g fill="#e4e4e4"><rect x="1026" y="257" width="29" height="10"/><rect x="1058" y="257" width="29" height="10"/><rect x="1091" y="257" width="29" height="10"/><rect x="1123" y="257" width="29" height="10"/><rect x="1155" y="257" width="29" height="10"/><rect x="1188" y="257" width="29" height="10"/></g>
<use href="#bt" x="1036" y="240"/><use href="#bt" x="1064" y="240"/><use href="#bt" x="1073" y="240"/><use href="#bt" x="1094" y="240"/><use href="#bt" x="1102" y="240"/><use href="#bt" x="1110" y="240"/><use href="#bt" x="1133" y="240"/><use href="#bt" x="1161" y="240"/><use href="#bt" x="1170" y="240"/><use href="#bt" x="1191" y="240"/><use href="#bt" x="1199" y="240"/><use href="#bt" x="1207" y="240"/>
<text x="1040.500" y="264">Burst</text><text x="1072.500" y="264">Burst</text><text x="1105.500" y="264">Burst</text><text x="1137.500" y="264">Random</text><text x="1169.500" y="264">Random</text><text x="1202.500" y="264">Random</text>
</g>
<use href="#tx" x="1026" y="270"/><use href="#tx" x="1091" y="270"/>
<rect x="1058" y="270" width="29" height="30" fill="#424242"/>
<rect x="1123" y="270" width="29" height="30" fill="#4d4d4d" stroke="#999" stroke-width="1"/>
<path d="M1030 285H1051" stroke="#fff" stroke-width="1.500"/><path d="M1035 281v8l-6-4zM1046 281v8l6-4z" fill="#fff"/>
<path d="M1072.500 275V295" stroke="#ddd" stroke-width="2"/><path d="M1068.500 280h8l-4-6zM1068.500 291h8l-4 6z" fill="#fff"/>
<path d="M1105.500 275V295M1095 285H1116" stroke="#d8b8d8" stroke-width="2"/><path d="M1101.500 280h8l-4-6zM1101.500 291h8l-4 6zM1100 281v8l-6-4zM1111 281v8l6-4z" fill="#fff"/>
<g text-anchor="middle" fill="#fff" font-weight="bold" font-size="8.500" letter-spacing=".8"><text x="1137.500" y="280">XY</text><text x="1137.500" y="288">AUTO</text><text x="1137.500" y="296">OFF</text></g>
<path d="M991 289L1009 305H991Z" fill="#8fdc28"/><path d="M994 301h6M997 298v6" stroke="#fff" stroke-width="1.500"/>
</svg>

<!-- Channels -->
<div class="w" style="left:1041px;top:311px;width:244px;height:120px"><div class="h" style="left:0;top:1px;width:242px"></div></div>
<div class="lk" style="left:1223px;top:313px"><svg width="17" height="16" style="display:block"><use href="#lock" x="-1" y="-1"/></svg></div>
<div class="x" style="left:1249px;top:313px">X</div>
<div class="b f" style="left:1049px;top:340px;width:29px;height:19px"></div>
<div class="b" style="left:1049px;top:360px;width:29px;height:19px"></div>
<div class="b" style="left:1049px;top:380px;width:29px;height:19px"></div>
<div class="b" style="left:1049px;top:399px;width:29px;height:19px"></div>
<div class="s s3" style="left:1082px;top:344px;width:195px;height:14px">Focus Fine     0%</div>
<div class="s s3" style="left:1082px;top:363px;width:195px;height:14px">Speed XY     0%</div>
<div class="s s3" style="left:1082px;top:381px;width:195px;height:14px">Aro Strobe     0%</div>
<div class="s s3" style="left:1082px;top:400px;width:195px;height:14px">Aro Macro Speed     0%</div>
</body></html>
